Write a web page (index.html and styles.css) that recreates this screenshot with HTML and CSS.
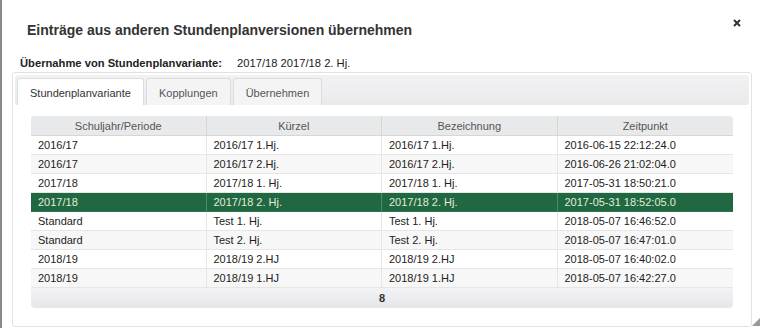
FILE: index.html
```html
<!DOCTYPE html>
<html lang="de">
<head>
    <meta charset="UTF-8">
    <title>Einträge übernehmen</title>
    <link rel="stylesheet" href="styles.css">
</head>
<body>
    <div class="dialog">
        <div class="dialog-head">
            <h1>Einträge aus anderen Stundenplanversionen übernehmen</h1>
            <span class="close">
                <svg width="8" height="8" viewBox="0 0 8 8"><path d="M1 1L7 7M7 1L1 7" stroke="#333" stroke-width="2"/></svg>
            </span>
        </div>
        <div class="dialog-body">
            <div class="source">
                <b>Übernahme von Stundenplanvariante:</b>
                <span>2017/18 2017/18 2. Hj.</span>
            </div>
            <div class="tabs">
                <ul class="tab-nav">
                    <li class="active">Stundenplanvariante</li>
                    <li>Kopplungen</li>
                    <li>Übernehmen</li>
                </ul>
                <div class="tab-panel">
                    <table class="grid">
                        <thead>
                            <tr><th>Schuljahr/Periode</th><th>Kürzel</th><th>Bezeichnung</th><th>Zeitpunkt</th></tr>
                        </thead>
                        <tbody>
                            <tr><td>2016/17</td><td>2016/17 1.Hj.</td><td>2016/17 1.Hj.</td><td>2016-06-15 22:12:24.0</td></tr>
                            <tr><td>2016/17</td><td>2016/17 2.Hj.</td><td>2016/17 2.Hj.</td><td>2016-06-26 21:02:04.0</td></tr>
                            <tr><td>2017/18</td><td>2017/18 1. Hj.</td><td>2017/18 1. Hj.</td><td>2017-05-31 18:50:21.0</td></tr>
                            <tr class="selected"><td>2017/18</td><td>2017/18 2. Hj.</td><td>2017/18 2. Hj.</td><td>2017-05-31 18:52:05.0</td></tr>
                            <tr><td>Standard</td><td>Test 1. Hj.</td><td>Test 1. Hj.</td><td>2018-05-07 16:46:52.0</td></tr>
                            <tr><td>Standard</td><td>Test 2. Hj.</td><td>Test 2. Hj.</td><td>2018-05-07 16:47:01.0</td></tr>
                            <tr><td>2018/19</td><td>2018/19 2.HJ</td><td>2018/19 2.HJ</td><td>2018-05-07 16:40:02.0</td></tr>
                            <tr><td>2018/19</td><td>2018/19 1.HJ</td><td>2018/19 1.HJ</td><td>2018-05-07 16:42:27.0</td></tr>
                        </tbody>
                        <tfoot>
                            <tr><td colspan="4">8</td></tr>
                        </tfoot>
                    </table>
                </div>
            </div>
        </div>
        <span class="resize">
            <svg width="8" height="8" viewBox="0 0 8 8"><path d="M8 0L8 8L0 8Z" fill="#999"/></svg>
        </span>
    </div>
</body>
</html>
```

FILE: styles.css
```css
* { margin: 0; padding: 0; box-sizing: border-box; }
body {
    font-family: "Liberation Sans", Arial, sans-serif;
    font-size: 11px;
    color: #333;
    background: #fff;
}
.dialog {
    position: relative;
    height: 328px;
    border-left: 2px solid #8a8a8a;
    overflow: hidden;
}
.dialog-head {
    display: flex;
    justify-content: space-between;
    align-items: center;
    padding: 22px 0 0 25px;
}
.dialog-head h1 {
    font-size: 14px;
    line-height: 17px;
    font-weight: bold;
    color: #333;
}
.close {
    position: absolute;
    top: 19px;
    right: 21px;
    display: flex;
}
.dialog-body {
    padding: 0 10px;
}
.source {
    margin-top: 17px;
    padding-left: 8px;
    line-height: 14px;
    display: flex;
    font-size: 11.2px;
}
.source b { color: #222; }
.source span { margin-left: 15px; color: #222; }
.tabs {
    margin-top: 2px;
    border: 1px solid #e2e2e2;
    border-radius: 3px;
    padding: 2px;
}
.tab-nav {
    list-style: none;
    display: flex;
    gap: 2px;
    padding: 3px 2px 0;
    background: linear-gradient(#f2f2f3, #e9eaec);
    border-radius: 3px;
    height: 30px;
}
.tab-nav li {
    padding: 7px 12px 6px;
    line-height: 14px;
    border: 1px solid #dcdcdc;
    border-bottom: none;
    border-radius: 3px 3px 0 0;
    background: #f4f4f5;
    color: #555;
}
.tab-nav li.active {
    background: #fff;
    color: #333;
}
.tab-panel {
    padding: 11px 16px 16px;
}
.grid {
    width: 100%;
    border-collapse: separate;
    border-spacing: 0;
    table-layout: fixed;
}
.grid th {
    background: #e8e9eb;
    color: #555;
    font-weight: normal;
    text-align: center;
    height: 20px;
    border-right: 1px solid #d6d6d6;
    border-bottom: 1px solid #d6d6d6;
}
.grid th:first-child { border-top-left-radius: 3px; }
.grid th:last-child { border-top-right-radius: 3px; border-right: none; }
.grid td {
    padding: 3px 7px 3px 7px;
    line-height: 12px;
    height: 19px;
    color: #222;
    border-right: 1px solid #e6e6e6;
    border-bottom: 1px solid #e6e6e6;
    white-space: nowrap;
}
.grid td:last-child { border-right: none; }
.grid tbody tr:nth-child(even) td { background: #f7f7f7; }
.grid tbody tr.selected td {
    background: #1f6842;
    color: #e4ecd8;
    border-right-color: #4f8a68;
    border-bottom-color: #2d7550;
}
.grid tfoot td {
    text-align: center;
    font-weight: bold;
    color: #333;
    background: linear-gradient(#f3f3f5, #e5e6e9);
    border: none;
    border-radius: 0 0 4px 4px;
    height: 20px;
}
.resize {
    position: absolute;
    right: 2px;
    bottom: 2px;
    display: flex;
}
```
